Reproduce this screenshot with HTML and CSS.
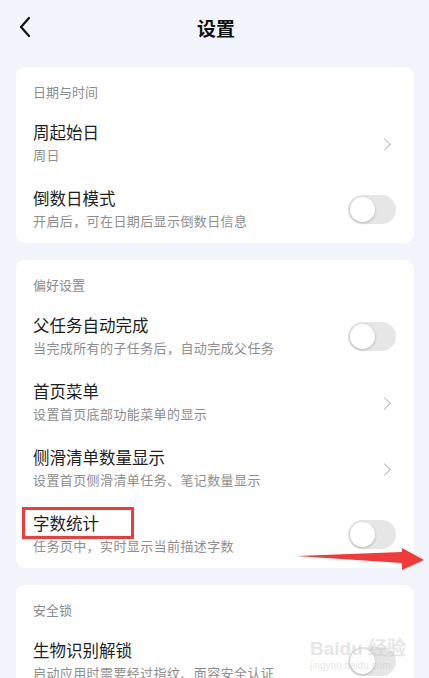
FILE: index.html
```html
<!DOCTYPE html>
<html lang="zh-CN">
<head>
    <meta charset="UTF-8">
    <meta name="viewport" content="width=device-width, initial-scale=1.0">
    <title>设置</title>
    <link rel="stylesheet" href="styles.css">
</head>
<body>
    <div class="page">
        <!-- 顶部栏 -->
        <div class="topbar">
            <svg class="back" width="14" height="22" viewBox="0 0 14 22">
                <path d="M11 2 L3 11 L11 20" fill="none" stroke="#111" stroke-width="2.2" stroke-linecap="round" stroke-linejoin="round"/>
            </svg>
            <div class="title">设置</div>
        </div>

        <div class="card">
            <div class="card-head">日期与时间</div>
            <div class="row">
                <div class="text">
                    <div class="name">周起始日</div>
                    <div class="desc">周日</div>
                </div>
                <span class="chevron"></span>
            </div>
            <div class="row">
                <div class="text">
                    <div class="name">倒数日模式</div>
                    <div class="desc">开启后，可在日期后显示倒数日信息</div>
                </div>
                <span class="switch"><span class="knob"></span></span>
            </div>
        </div>

        <div class="card">
            <div class="card-head">偏好设置</div>
            <div class="row">
                <div class="text">
                    <div class="name">父任务自动完成</div>
                    <div class="desc">当完成所有的子任务后，自动完成父任务</div>
                </div>
                <span class="switch"><span class="knob"></span></span>
            </div>
            <div class="row">
                <div class="text">
                    <div class="name">首页菜单</div>
                    <div class="desc">设置首页底部功能菜单的显示</div>
                </div>
                <span class="chevron"></span>
            </div>
            <div class="row">
                <div class="text">
                    <div class="name">侧滑清单数量显示</div>
                    <div class="desc">设置首页侧滑清单任务、笔记数量显示</div>
                </div>
                <span class="chevron"></span>
            </div>
            <div class="row">
                <div class="text">
                    <div class="name">字数统计</div>
                    <div class="desc">任务页中，实时显示当前描述字数</div>
                </div>
                <span class="switch"><span class="knob"></span></span>
            </div>
        </div>

        <div class="card">
            <div class="card-head">安全锁</div>
            <div class="row">
                <div class="text">
                    <div class="name">生物识别解锁</div>
                    <div class="desc">启动应用时需要经过指纹、面容安全认证</div>
                </div>
                <span class="switch"><span class="knob"></span></span>
            </div>
        </div>
    </div>

    <!-- 标注：红框和箭头 -->
    <div class="mark-box"></div>
    <svg class="mark-arrow" width="429" height="678" viewBox="0 0 429 678">
        <polygon points="296,556 402,552 402,548 424,560 402,570 402,563" fill="#f23a3a"/>
    </svg>

    <div class="watermark">
        <div class="wm-big">Baidu 经验</div>
        <div class="wm-small">jingyan.baidu.com</div>
    </div>
</body>
</html>
```

FILE: styles.css
```css
body {
    margin: 0;
    background-color: #f1f4fa;
    font-family: "Noto Sans CJK SC", "Noto Sans", sans-serif;
    overflow: hidden;
    height: 678px;
    position: relative;
}
.page {
    padding: 0 15px 0 16px;
}
.topbar {
    height: 55px;
    display: flex;
    align-items: center;
    justify-content: center;
    position: relative;
}
.back {
    position: absolute;
    left: 2px;
    top: 16px;
}
.title {
    font-size: 19px;
    font-weight: bold;
    color: #111;
    margin-left: 2px;
}
.card {
    background-color: #fff;
    border-radius: 9px;
    margin-top: 12px;
    margin-bottom: 17px;
    padding: 15px 18px 1px 17px;
}
.card + .card {
    margin-top: 0;
}
.card:first-of-type {
    padding-top: 16px;
}
.card-head {
    font-size: 13px;
    line-height: 20px;
    color: #8c8c8c;
    margin-bottom: 8px;
}
.row {
    height: 66px;
    display: flex;
    align-items: center;
    justify-content: space-between;
}
.text {
    padding-top: 10px;
    padding-bottom: 12px;
}
.name {
    font-size: 16.5px;
    line-height: 24px;
    color: #1e1e1e;
}
.desc {
    font-size: 13px;
    line-height: 21px;
    letter-spacing: 0.4px;
    color: #8e8e8e;
}
.chevron {
    width: 8px;
    height: 8px;
    border-top: 1.6px solid #b8b8b8;
    border-right: 1.6px solid #b8b8b8;
    transform: rotate(45deg);
    margin-right: 7px;
    margin-top: 2px;
}
.switch {
    width: 48px;
    height: 29px;
    border-radius: 15px;
    background-color: #e6e6e6;
    position: relative;
    flex-shrink: 0;
}
.knob {
    position: absolute;
    left: 2px;
    top: 2px;
    width: 25px;
    height: 25px;
    border-radius: 50%;
    background-color: #fff;
    box-shadow: 0 1px 3px rgba(0, 0, 0, 0.22);
}
/* 标注 */
.mark-box {
    position: absolute;
    left: 22px;
    top: 507px;
    width: 106px;
    height: 26px;
    border: 3px solid #f23a3a;
}
.mark-arrow {
    position: absolute;
    left: 0;
    top: 0;
    pointer-events: none;
}
.watermark {
    position: absolute;
    left: 310px;
    top: 638px;
    color: rgba(190, 190, 190, 0.4);
    font-family: "Liberation Sans", sans-serif;
}
.wm-big {
    font-size: 19px;
    font-weight: bold;
    line-height: 22px;
}
.wm-small {
    font-size: 10px;
    line-height: 12px;
}
```
